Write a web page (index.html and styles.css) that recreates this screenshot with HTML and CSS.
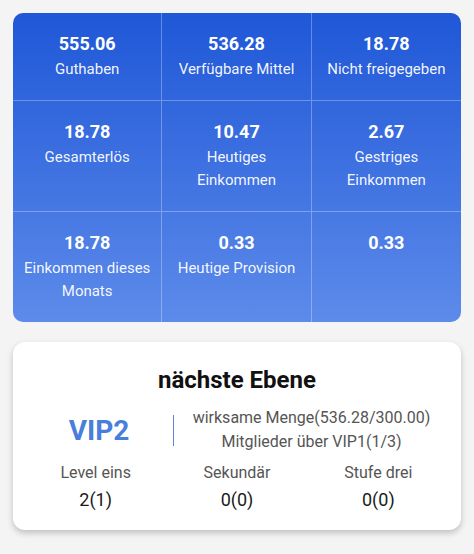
FILE: index.html
```html
<!DOCTYPE html>
<html lang="de">
<head>
    <meta charset="UTF-8">
    <meta name="viewport" content="width=device-width, initial-scale=1.0">
    <title>Konto</title>
    <link rel="stylesheet" href="styles.css">
</head>
<body>
    <div class="page">
        <div class="stats">
            <div class="stat">
                <div class="stat-value">555.06</div>
                <div class="stat-label">Guthaben</div>
            </div>
            <div class="stat">
                <div class="stat-value">536.28</div>
                <div class="stat-label">Verfügbare Mittel</div>
            </div>
            <div class="stat">
                <div class="stat-value">18.78</div>
                <div class="stat-label">Nicht freigegeben</div>
            </div>
            <div class="stat">
                <div class="stat-value">18.78</div>
                <div class="stat-label">Gesamterlös</div>
            </div>
            <div class="stat">
                <div class="stat-value">10.47</div>
                <div class="stat-label">Heutiges Einkommen</div>
            </div>
            <div class="stat">
                <div class="stat-value">2.67</div>
                <div class="stat-label">Gestriges Einkommen</div>
            </div>
            <div class="stat">
                <div class="stat-value">18.78</div>
                <div class="stat-label">Einkommen dieses Monats</div>
            </div>
            <div class="stat">
                <div class="stat-value">0.33</div>
                <div class="stat-label">Heutige Provision</div>
            </div>
            <div class="stat">
                <div class="stat-value">0.33</div>
                <div class="stat-label"></div>
            </div>
        </div>

        <div class="level-card">
            <h2 class="level-title">nächste Ebene</h2>
            <div class="level-row">
                <div class="level-name">VIP2</div>
                <div class="level-divider"></div>
                <div class="level-req">
                    <div>wirksame Menge(536.28/300.00)</div>
                    <div>Mitglieder über VIP1(1/3)</div>
                </div>
            </div>
            <div class="team">
                <div class="team-item">
                    <div class="team-label">Level eins</div>
                    <div class="team-value">2(1)</div>
                </div>
                <div class="team-item">
                    <div class="team-label">Sekundär</div>
                    <div class="team-value">0(0)</div>
                </div>
                <div class="team-item">
                    <div class="team-label">Stufe drei</div>
                    <div class="team-value">0(0)</div>
                </div>
            </div>
        </div>
    </div>
</body>
</html>
```

FILE: styles.css
```css
body {
    margin: 0;
    background-color: #f4f4f4;
    font-family: Roboto, 'Noto Sans', sans-serif;
    color: #222;
}

.page {
    padding: 13px;
}

/* blue stats block */
.stats {
    display: grid;
    grid-template-columns: repeat(3, 1fr);
    background: linear-gradient(180deg, #1f57d7 0%, #5d8bea 100%);
    border-radius: 10px;
    overflow: hidden;
    color: white;
}

.stat {
    padding: 19px 6px;
    text-align: center;
    border-right: 1px solid rgba(255, 255, 255, 0.3);
    border-top: 1px solid rgba(255, 255, 255, 0.3);
}

.stat:nth-child(3n) {
    border-right: none;
}

.stat:nth-child(-n+3) {
    border-top: none;
}

.stat-value {
    font-size: 18px;
    font-weight: 700;
    line-height: 24px;
}

.stat-label {
    margin-top: 2px;
    font-size: 15px;
    line-height: 23px;
    color: rgba(255, 255, 255, 0.95);
}

/* next level card */
.level-card {
    margin-top: 20px;
    background: white;
    border-radius: 12px;
    box-shadow: 0 3px 6px rgba(0, 0, 0, 0.22);
    padding: 24px 12px 16px;
}

.level-title {
    margin: 0;
    text-align: center;
    font-size: 24px;
    line-height: 28px;
    font-weight: 700;
    color: #111;
}

.level-row {
    display: flex;
    align-items: center;
    height: 50px;
    margin-top: 11px;
}

.level-name {
    width: 148px;
    text-align: center;
    font-size: 28px;
    font-weight: 700;
    color: #4a7edd;
}

.level-divider {
    width: 1px;
    height: 31px;
    background-color: #5b86d8;
}

.level-req {
    flex: 1;
    text-align: center;
    font-size: 16px;
    line-height: 24px;
    color: #555;
}

.team {
    display: grid;
    grid-template-columns: repeat(3, 1fr);
    margin-top: 6px;
    text-align: center;
}

.team-label {
    font-size: 16px;
    line-height: 24px;
    color: #555;
}

.team-value {
    margin-top: 1px;
    font-size: 18px;
    line-height: 28px;
    color: #1a1a1a;
}
```
